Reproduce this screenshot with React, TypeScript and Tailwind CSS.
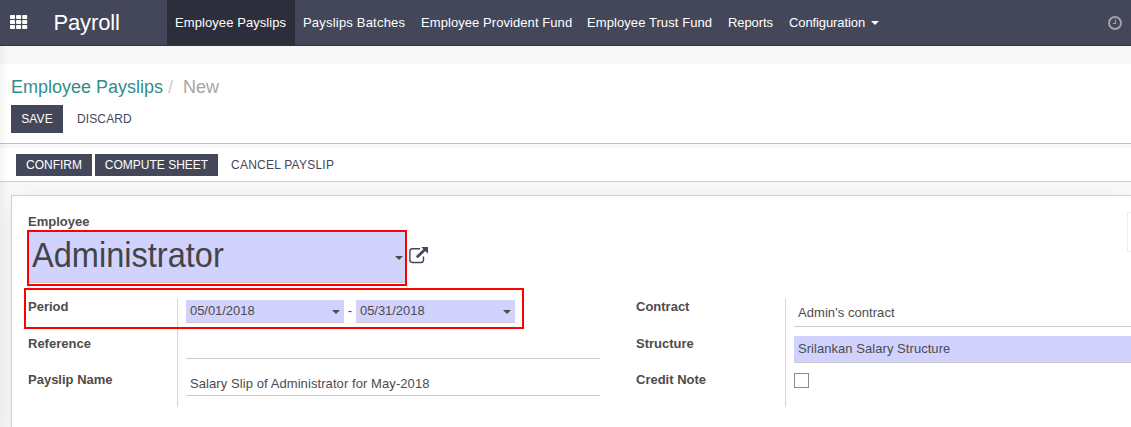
import type { ReactNode } from "react";

const navItems = [
  { label: "Payslips Batches", box: "w-[118px]", text: "tracking-[0.2px]" },
  { label: "Employee Provident Fund", box: "w-[166px]", text: "tracking-[0.07px]" },
  { label: "Employee Trust Fund", box: "w-[141px]", text: "tracking-[0.08px]" },
  { label: "Reports", box: "w-[61px]", text: "tracking-[-0.1px]" },
];

function Caret({ className = "" }: { className?: string }) {
  return (
    <svg className={className} width="8" height="4" viewBox="0 0 8 4" fill="currentColor">
      <path d="M0 0h8L4 4z" />
    </svg>
  );
}

function GridIcon() {
  return (
    <svg width="18" height="14" viewBox="0 0 18 14" fill="white">
      {[0, 5, 10].map((y) =>
        [0, 6.1, 12.2].map((x) => <rect key={`${x}-${y}`} x={x} y={y} width="5" height="4" rx="0.7" />),
      )}
    </svg>
  );
}

function ClockIcon() {
  return (
    <svg width="14" height="14" viewBox="0 0 14 14" fill="none" stroke="#a1a3ac">
      <circle cx="7" cy="7" r="6" strokeWidth="1.9" />
      <path d="M7.5 3.5v4H4.8" strokeWidth="1.1" />
    </svg>
  );
}

function ExternalLinkIcon() {
  return (
    <svg width="20" height="17" viewBox="0 0 20 17" fill="none" stroke="#43475a">
      <path d="M11 1.8H3.2A2.4 2.4 0 0 0 .9 4.2v8.9a2.4 2.4 0 0 0 2.3 2.4h8.9a2.4 2.4 0 0 0 2.4-2.4V9.6" strokeWidth="1.4" />
      <path d="M7.8 10.3 16 2.6" strokeWidth="2.7" />
      <path d="M12.3 0H19v6.7z" fill="#43475a" stroke="none" />
    </svg>
  );
}

function Label({ children, className }: { children: ReactNode; className: string }) {
  return <div className={`font-bold leading-4 text-[#4c4c4c] ${className}`}>{children}</div>;
}

export default function App() {
  return (
    <div className="relative flex h-[427px] w-[1131px] flex-col overflow-hidden whitespace-nowrap bg-[#f8f8f8] font-['Liberation_Sans',sans-serif] text-[13px] text-[#4c4c4c]">
      <header className="flex h-[46px] shrink-0 items-stretch border-b border-[#2f3241] bg-[#434759] text-white">
        <div className="flex w-[53.5px] items-center pb-px pl-2.5">
          <GridIcon />
        </div>
        <div className="w-[113.5px] pt-[9px] text-[22px] leading-7 tracking-[-0.15px]">Payroll</div>
        <nav className="flex leading-[45px]">
          <a className="w-32 bg-[#2c2f3b] pl-2 tracking-[0.08px]">Employee Payslips</a>
          {navItems.map((item) => (
            <a key={item.label} className={`${item.box} ${item.text} pl-2`}>
              {item.label}
            </a>
          ))}
          <a className="flex items-center pl-2 tracking-[-0.1px]">
            Configuration
            <Caret className="ml-[6px]" />
          </a>
        </nav>
        <div className="ml-auto flex items-center pr-[9px]">
          <ClockIcon />
        </div>
      </header>

      <section className="mt-[18px] h-20 shrink-0 border-b border-[#bcc0c0] bg-white pl-[11px]">
        <div className="flex pt-[12px] text-[18px] leading-[22px]">
          <span className="w-[157px] text-[#2f8e89]">Employee Payslips</span>
          <span className="w-[15px] text-[#ccc]">/</span>
          <span className="text-[#aaa5a0]">New</span>
        </div>
        <div className="mt-[7px] flex h-7 text-[12px] leading-7">
          <button className="w-[52px] bg-[#434759] text-white tracking-[0.15px]">SAVE</button>
          <button className="ml-3.5 text-[#434759] tracking-[0.12px]">DISCARD</button>
        </div>
      </section>

      <section className="mt-1 flex h-[34px] shrink-0 border-b border-[#d0d0d0] bg-white pl-4 pt-1.5 text-[12px] leading-[22px]">
        <button className="h-[22px] w-[76px] bg-[#434759] text-white">CONFIRM</button>
        <button className="ml-[3px] h-[22px] w-[123px] bg-[#434759] text-white">COMPUTE SHEET</button>
        <button className="ml-[13px] h-[22px] text-[#434759] tracking-[0.24px]">CANCEL PAYSLIP</button>
      </section>

      <main className="ml-[11px] mt-[13px] h-[240px] shrink-0 border-l border-t border-[#cfcfcf] bg-white pl-4 shadow-[0_5px_20px_-5px_rgba(0,0,0,0.12)]">
        <div className="flex h-[102px] justify-between">
          <div>
            <Label className="pt-[18px]">Employee</Label>
            <div className="mt-0.5 flex items-start">
              <div className="flex h-[51px] w-[377px] items-center justify-between border-b border-[#ccc] bg-[#d2d2ff] pl-1 pr-0.5">
                <span className="-mt-[4px] origin-left scale-x-[0.93] text-[35px] leading-[44px] text-[#444]">
                  Administrator
                </span>
                <Caret className="mt-0.5" />
              </div>
              <div className="ml-1 mt-[15px]">
                <ExternalLinkIcon />
              </div>
            </div>
          </div>
          <div className="mt-4 h-10 w-1 border-y border-l border-[#eee]" />
        </div>

        <div className="flex">
          <div className="w-[149px] pt-px">
            <Label className="h-[37px]">Period</Label>
            <Label className="h-9">Reference</Label>
            <Label className="h-9">Payslip Name</Label>
          </div>
          <div className="h-[109px] w-[423px] border-l border-[#d6d6d6] pl-2">
            <div className="flex h-[25px] pt-0.5">
              <div className="flex h-[23px] w-[158px] items-center justify-between border-b border-[#ccc] bg-[#d2d2ff] px-1">
                <span className="tracking-[-0.05px]">05/01/2018</span>
                <Caret className="mt-0.5" />
              </div>
              <span className="w-3 text-center leading-[22px]">-</span>
              <div className="flex h-[23px] w-[159px] items-center justify-between border-b border-[#ccc] bg-[#d2d2ff] px-1">
                <span className="tracking-[-0.05px]">05/31/2018</span>
                <Caret className="mt-0.5" />
              </div>
            </div>
            <div className="mt-[11px] h-[25px] border-b border-[#ccc]" />
            <div className="mt-3 h-[25px] border-b border-[#ccc] pl-1 leading-[26px] tracking-[0.08px]">
              Salary Slip of Administrator for May-2018
            </div>
          </div>
          <div className="ml-9 w-[149px] pt-px">
            <Label className="h-[37px]">Contract</Label>
            <Label className="h-9">Structure</Label>
            <Label className="h-9">Credit Note</Label>
          </div>
          <div className="h-[109px] flex-1 border-l border-[#d6d6d6] pl-2">
            <div className="mt-[3px] h-[26px] border-b border-[#ccc] pl-1 leading-[24px] tracking-[0.06px]">
              Admin's contract
            </div>
            <div className="mt-[9px] h-[27px] border-b border-[#ccc] bg-[#d2d2ff] pl-1 leading-[26px] tracking-[0.05px]">
              Srilankan Salary Structure
            </div>
            <div className="mt-2.5 h-[15px] w-[15px] border border-[#8a8a8a] bg-white" />
          </div>
        </div>
      </main>

      <div className="pointer-events-none absolute left-0 top-[46px] h-[381px] w-2 bg-linear-to-r from-black/4 to-transparent" />
      <div className="absolute left-[27px] top-[230px] h-14 w-[380px] border-2 border-[#f00]" />
      <div className="absolute left-[24px] top-[288px] h-[41px] w-[500px] border-2 border-[#f00]" />
    </div>
  );
}
